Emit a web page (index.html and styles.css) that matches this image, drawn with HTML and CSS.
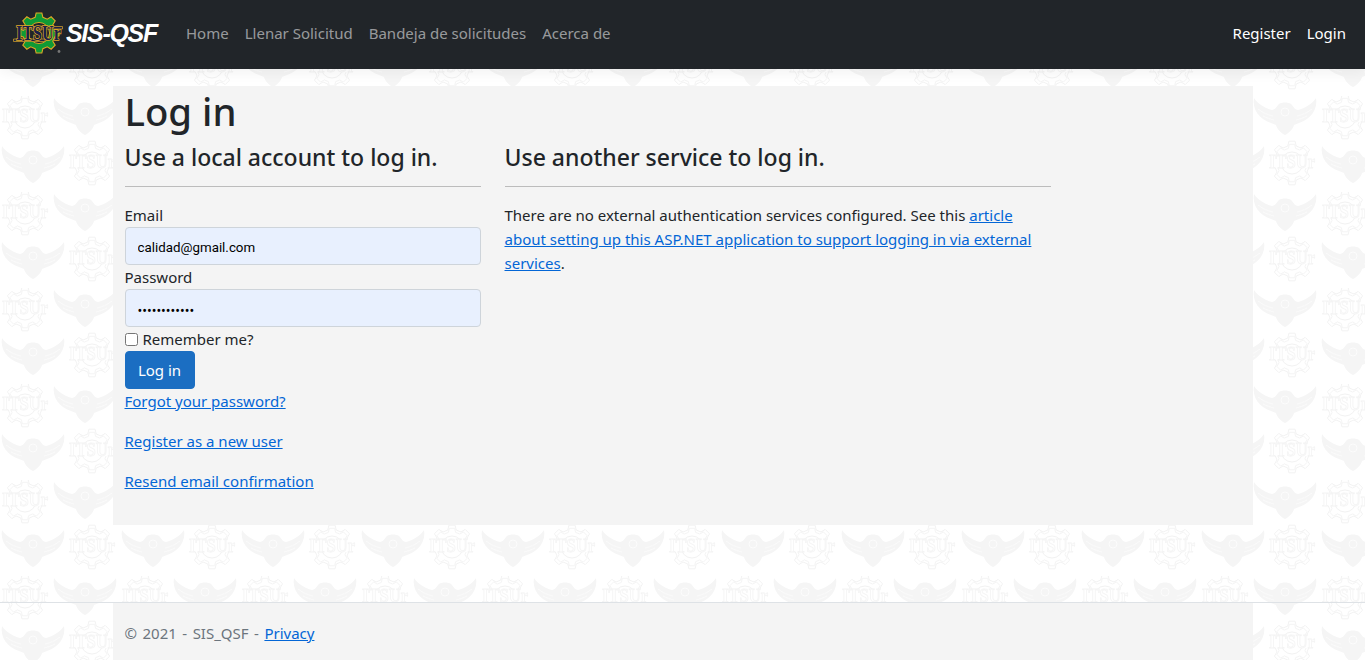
FILE: index.html
```html
<!DOCTYPE html>
<html lang="en">
<head>
<meta charset="utf-8">
<title>Log in - SIS_QSF</title>
<link rel="stylesheet" href="styles.css">
</head>
<body>
<header class="navbar">
  <a class="brand" href="#">
    <svg class="brand-logo" viewBox="0 0 50 42" width="50" height="42" aria-hidden="true">
      <g transform="translate(26 21) scale(.92)">
        <path class="gear-body" d="M-4.2-17-3.1-21.8H3.1L4.2-17 9-15 13.2-17.6 17.6-13.2 15-9 17-4.2 21.8-3.1V3.1L17 4.2 15 9 17.6 13.2 13.2 17.6 9 15 4.2 17 3.1 21.8H-3.1L-4.2 17-9 15-13.2 17.6-17.6 13.2-15 9-17 4.2-21.8 3.1V-3.1L-17-4.2-15-9-17.6-13.2-13.2-17.6-9-15Z"/>
        <circle class="gear-hole" r="11.5"/>
      </g>
      <path class="bar" d="M8 14.5H49.5V17H8Z"/>
      <path class="bar" d="M.5 27H32V29.5H.5Z"/>
      <text class="logo-letters" x="3" y="21.5" textLength="45" lengthAdjust="spacingAndGlyphs" transform="scale(1 1.3)">ITSUr</text>
      <circle class="reg" cx="46" cy="39.5" r="1.4"/>
    </svg>
    <span class="brand-name">SIS-QSF</span>
  </a>
  <nav class="nav-main">
    <a href="#">Home</a>
    <a href="#">Llenar Solicitud</a>
    <a href="#">Bandeja de solicitudes</a>
    <a href="#">Acerca de</a>
  </nav>
  <nav class="nav-user">
    <a href="#">Register</a>
    <a href="#">Login</a>
  </nav>
</header>

<main class="container page">
  <h1>Log in</h1>
  <div class="row">
    <section class="col-local">
      <h4>Use a local account to log in.</h4>
      <hr>
      <form>
        <label for="email">Email</label>
        <input class="field field-email" id="email" type="text" value="calidad@gmail.com">
        <label for="password">Password</label>
        <input class="field field-pass" id="password" type="password" value="calidad12345">
        <label class="check"><input type="checkbox"> Remember me?</label>
        <button class="btn" type="button">Log in</button>
      </form>
      <p><a href="#">Forgot your password?</a></p>
      <p><a href="#">Register as a new user</a></p>
      <p><a href="#">Resend email confirmation</a></p>
    </section>
    <section class="col-external">
      <h4>Use another service to log in.</h4>
      <hr>
      <p>There are no external authentication services configured. See this <a href="#">article about setting up this ASP.NET application to support logging in via external services</a>.</p>
    </section>
  </div>
</main>

<footer class="footer">
  <div class="container footer-inner">© 2021 - SIS_QSF - <a class="footer-link" href="#">Privacy</a></div>
</footer>
</body>
</html>
```

FILE: styles.css
```css
* { box-sizing: border-box; }
html, body { height: 100%; }
body {
  margin: 0;
  overflow: hidden;
  display: flex;
  flex-direction: column;
  font: 15px/24px "Noto Sans", "Open Sans", sans-serif;
  color: #212529;
  background-color: #fff;
  background-image: url("data:image/svg+xml,%3Csvg xmlns='http://www.w3.org/2000/svg' width='120' height='96' viewBox='0 0 120 96'%3E%3Cdefs%3E%3Cg id='e'%3E%3Cpath fill='%23f5f5f5' d='M-31-17C-27-11-20-7-13-5C-10-5-8-9-6-11C-3-13 3-13 6-11C8-9 10-5 13-5C20-7 27-11 31-17C33-6 26 4 14 8L9 10C8 14 4 18 0 20C-4 18-8 14-9 10L-14 8C-26 4-33-6-31-17Z'/%3E%3Cpath fill='none' stroke='%23fbfbfb' stroke-width='.8' d='M-27-6C-22-2-17 0-12 1M-22 1C-18 3-15 4-11 5M27-6C22-2 17 0 12 1M22 1C18 3 15 4 11 5'/%3E%3Ccircle r='4' cy='-3' fill='none' stroke='%23fcfcfc' stroke-width='1'/%3E%3C/g%3E%3Cpath id='p' d='M-4.2-17-3.1-21.8H3.1L4.2-17 9-15 13.2-17.6 17.6-13.2 15-9 17-4.2 21.8-3.1V3.1L17 4.2 15 9 17.6 13.2 13.2 17.6 9 15 4.2 17 3.1 21.8H-3.1L-4.2 17-9 15-13.2 17.6-17.6 13.2-15 9-17 4.2-21.8 3.1V-3.1L-17-4.2-15-9-17.6-13.2-13.2-17.6-9-15Z'/%3E%3Cg id='g' fill='%23fff' stroke='%23f2f2f2' stroke-width='1'%3E%3Cuse href='%23p'/%3E%3Cuse href='%23p' transform='scale(.86)'/%3E%3Ccircle r='11' fill='none'/%3E%3Cpath d='M-23-8H23V5H-23Z' stroke='none' fill='%23fff'/%3E%3Ctext transform='scale(1 1.3)' x='0' y='4' text-anchor='middle' font-family='Liberation Serif,serif' font-weight='bold' font-size='14' stroke='%23f4f4f4' stroke-width='.6' textLength='46' lengthAdjust='spacingAndGlyphs'%3EITSUr%3C/text%3E%3C/g%3E%3C/defs%3E%3Cuse href='%23g' x='25' y='21'/%3E%3Cuse href='%23e' x='85' y='19'/%3E%3Cuse href='%23e' x='33' y='67'/%3E%3Cuse href='%23g' x='92' y='67'/%3E%3C/svg%3E");
  background-position: 0 0;
}
a { color: #0366d6; }
p { margin: 0 0 16px; }
hr { margin: 14px 0 16px; border: 0; border-top: 1px solid #bcbcbc; }
h1, h4 { margin: 0; font-weight: 500; }
h1 { margin-bottom: 6px; font-size: 38.3px; line-height: 50px; }
h4 { font-size: 23px; line-height: 30px; }

.navbar {
  flex: none;
  display: flex;
  align-items: center;
  height: 69px;
  padding: 0 11px 3px 12px;
  background: #212529;
  box-shadow: 0 4px 12px rgba(0, 0, 0, .05);
}
.navbar a { text-decoration: none; }
.brand { display: flex; align-items: center; width: 166px; }
.brand-logo { flex: none; margin: 0 3px 0 1px; }
.gear-body { fill: #0f9a35; stroke: #dfa826; stroke-width: 1.2; }
.gear-hole { fill: #212529; stroke: #dfa826; stroke-width: 1; }
.bar { fill: #1a2048; stroke: #dfa826; stroke-width: .7; }
.logo-letters {
  font: 700 16px "Liberation Serif", serif;
  fill: #1a2048;
  stroke: #dfa826;
  stroke-width: 1.2px;
  paint-order: stroke;
}
.reg { fill: #777; }
.brand-name {
  font: italic 700 25px/1 "Liberation Sans", sans-serif;
  color: #fff;
  letter-spacing: -1.3px;
}
.nav-main, .nav-user { display: flex; }
.nav-main a, .nav-user a { padding: 8px; }
.nav-main a { color: rgba(255, 255, 255, .55); }
.nav-user { margin-left: auto; }
.nav-user a { color: #fff; }

.container { width: 1140px; margin: 0 auto; padding: 0 12px; background: #f4f4f4; }
.page { flex: none; margin-top: 17px; padding-bottom: 16px; height: 439px; }
.row { display: flex; margin: 0 -12px; }
.col-local { width: 380px; padding: 0 12px; }
.col-external { width: 570px; padding: 0 12px; }

label { display: block; }
.field {
  display: block;
  width: 100%;
  height: 38px;
  padding: 7px 12px 5px;
  border: 1px solid #ced4da;
  border-radius: 4px;
  background: #e8f0fe;
  color: #000;
  font: 13.33px "Roboto", "Liberation Sans", sans-serif;
  outline: 0;
}
.field-pass { padding: 9px 12px 3px; font-size: 14px; }
.check input { margin: 0 1px 0 0; vertical-align: -1px; }
.btn {
  display: block;
  width: 70px;
  height: 38px;
  padding: 6px 12px;
  border: 1px solid #1b6ec2;
  border-radius: 4px;
  background: #1b6ec2;
  color: #fff;
  font: inherit;
}

.footer {
  flex: none;
  height: 58px;
  margin-top: 77px;
  overflow: hidden;
  border-top: 1px solid #dee2e6;
  color: #6c757d;
  line-height: 60px;
}
.footer-inner { height: 100%; word-spacing: 1.6px; }
.footer-link { word-spacing: 0; }
```
